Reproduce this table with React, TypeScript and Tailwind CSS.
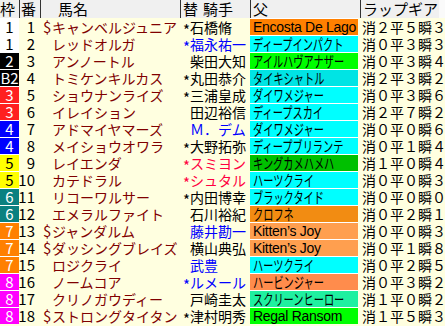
import React from "react";

type Row = {
  waku: number;
  label?: string;
  num: number;
  dollar?: boolean;
  horse: string;
  mark?: boolean;
  jockey: string;
  jc: "k" | "b" | "r";
  sire: string;
  sireBg: string;
  latin?: boolean;
  gear: string;
};

const rows: Row[] = [
  { waku: 1, num: 1, dollar: true, horse: "キャンベルジュニア", mark: true, jockey: "石橋脩", jc: "k", sire: "Encosta De Lago", sireBg: "bg-[#ff8000]", latin: true, gear: "消２平５瞬３" },
  { waku: 1, num: 2, horse: "レッドオルガ", mark: true, jockey: "福永祐一", jc: "b", sire: "ディープインパクト", sireBg: "bg-[#00ffff]", gear: "消０平３瞬３" },
  { waku: 2, num: 3, horse: "アンノートル", jockey: "柴田大知", jc: "k", sire: "アイルハヴアナザー", sireBg: "bg-[#00ff00]", gear: "消０平３瞬４" },
  { waku: 2, label: "B2", num: 4, horse: "トミケンキルカス", mark: true, jockey: "丸田恭介", jc: "k", sire: "タイキシャトル", sireBg: "bg-[#00e4e4]", gear: "消２平３瞬２" },
  { waku: 3, num: 5, horse: "ショウナンライズ", mark: true, jockey: "三浦皇成", jc: "k", sire: "ダイワメジャー", sireBg: "bg-[#00ffff]", gear: "消０平３瞬６" },
  { waku: 3, num: 6, horse: "イレイション", jockey: "田辺裕信", jc: "k", sire: "ディープスカイ", sireBg: "bg-[#00ffff]", gear: "消２平７瞬２" },
  { waku: 4, num: 7, horse: "アドマイヤマーズ", jockey: "Ｍ．デム", jc: "b", sire: "ダイワメジャー", sireBg: "bg-[#00ffff]", gear: "消０平０瞬６" },
  { waku: 4, num: 8, horse: "メイショウオワラ", mark: true, jockey: "大野拓弥", jc: "k", sire: "ディープブリランテ", sireBg: "bg-[#00ffff]", gear: "消０平１瞬４" },
  { waku: 5, num: 9, horse: "レイエンダ", mark: true, jockey: "スミヨン", jc: "r", sire: "キングカメハメハ", sireBg: "bg-[#00c000]", gear: "消１平０瞬４" },
  { waku: 5, num: 10, horse: "カテドラル", mark: true, jockey: "シュタル", jc: "r", sire: "ハーツクライ", sireBg: "bg-[#00ffff]", gear: "消０平０瞬３" },
  { waku: 6, num: 11, horse: "リコーワルサー", mark: true, jockey: "内田博幸", jc: "k", sire: "ブラックタイド", sireBg: "bg-[#00ffff]", gear: "消０平０瞬０" },
  { waku: 6, num: 12, horse: "エメラルファイト", jockey: "石川裕紀", jc: "k", sire: "クロフネ", sireBg: "bg-[#f28c12]", gear: "消０平２瞬１" },
  { waku: 7, num: 13, dollar: true, horse: "ジャンダルム", jockey: "藤井勘一", jc: "b", sire: "Kitten’s Joy", sireBg: "bg-[#ff9f4f]", latin: true, gear: "消０平０瞬３" },
  { waku: 7, num: 14, dollar: true, horse: "ダッシングブレイズ", jockey: "横山典弘", jc: "k", sire: "Kitten’s Joy", sireBg: "bg-[#ff9f4f]", latin: true, gear: "消０平１瞬８" },
  { waku: 7, num: 15, horse: "ロジクライ", jockey: "武豊", jc: "b", sire: "ハーツクライ", sireBg: "bg-[#00ffff]", gear: "消０平２瞬５" },
  { waku: 8, num: 16, horse: "ノームコア", mark: true, jockey: "ルメール", jc: "b", sire: "ハービンジャー", sireBg: "bg-[#ff8c4c]", gear: "消０平３瞬２" },
  { waku: 8, num: 17, horse: "クリノガウディー", jockey: "戸崎圭太", jc: "k", sire: "スクリーンヒーロー", sireBg: "bg-[#1ff0a0]", gear: "消１平０瞬２" },
  { waku: 8, num: 18, dollar: true, horse: "ストロングタイタン", mark: true, jockey: "津村明秀", jc: "k", sire: "Regal Ransom", sireBg: "bg-[#00ff00]", latin: true, gear: "消１平５瞬３" },
];

const wakuStyle: Record<number, string> = {
  1: "bg-white text-black",
  2: "bg-black text-white",
  3: "bg-[#ff2020] text-white",
  4: "bg-[#0000ff] text-white",
  5: "bg-[#ffff00] text-black",
  6: "bg-[#0a8080] text-white",
  7: "bg-[#ff8000] text-white",
  8: "bg-[#ff00ff] text-white",
};

const jockeyColor = {
  k: "text-black",
  b: "text-[#0000ff]",
  r: "text-[#ff0040]",
};

function Header() {
  return (
    <div className="flex h-[18px] bg-[#f0f0f0] text-black text-[15px] leading-[18px]">
      <div className="w-[20px] border-r border-[#333]">枠</div>
      <div className="w-[21px] border-r border-[#333] pl-[1px]">番</div>
      <div className="w-[140px] border-r border-[#333] pl-[17px]">馬名</div>
      <div className="w-[70px] border-r border-[#333] pl-[2px]">
        替<span className="ml-[5px]">騎手</span>
      </div>
      <div className="w-[110px] border-r border-[#333] pl-[2px]">父</div>
      <div className="w-[78px] pl-[2px]">ラップギア</div>
      <div className="flex-1 bg-[#fafafa]" />
    </div>
  );
}

function TableRow({ r }: { r: Row }) {
  return (
    <div className="flex h-[17px] leading-[16px] text-[14px]">
      <div
        className={`w-[19px] border-t border-white flex items-center justify-center text-[15px] ${wakuStyle[r.waku]}`}
      >
        {r.label ?? r.waku}
      </div>
      <div className="w-[21px] flex items-center justify-end pr-[5px] pt-px text-[15px]">{r.num}</div>
      <div className="w-[140px] flex items-center pl-[3px] pt-px overflow-hidden whitespace-nowrap text-[#800000]">
        <span className="w-[9px] shrink-0 text-[15px]">{r.dollar ? "$" : ""}</span>
        <span>{r.horse}</span>
      </div>
      <div
        className={`w-[70px] flex items-center pl-[3px] pt-px overflow-hidden whitespace-nowrap ${jockeyColor[r.jc]}`}
      >
        <span className="w-[7px] shrink-0 translate-y-[3px] text-[15px]">{r.mark ? "*" : ""}</span>
        <span>{r.jockey}</span>
      </div>
      <div
        className={`w-[108px] border-t border-white flex items-center pl-[3px] overflow-hidden whitespace-nowrap text-black ${r.sireBg}`}
      >
        {r.latin ? (
          <span className="font-['Liberation_Sans','Noto_Sans_CJK_JP',sans-serif] text-[14px] tracking-[-0.3px]">
            {r.sire}
          </span>
        ) : (
          <span className="inline-block origin-left scale-x-[0.68] text-[15px]">{r.sire}</span>
        )}
      </div>
      <div className="w-[2px]" />
      <div className="flex-1 flex items-center pl-[2px] pt-px whitespace-nowrap overflow-hidden">
        {r.gear}
      </div>
    </div>
  );
}

export default function App() {
  return (
    <div className="w-[445px] h-[326px] overflow-hidden bg-[#ffffe0] text-black font-['Noto_Sans_CJK_JP','Noto_Sans',sans-serif]">
      <Header />
      {rows.map((r) => (
        <TableRow key={r.num} r={r} />
      ))}
    </div>
  );
}
